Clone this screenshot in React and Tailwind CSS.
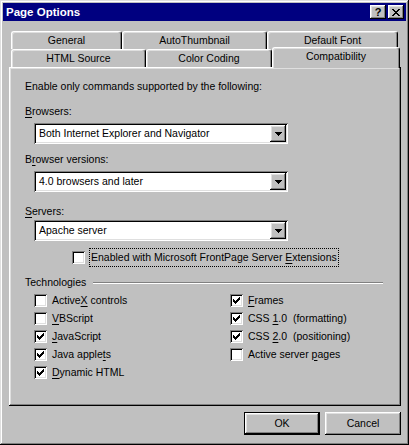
import React from "react";

const raised =
  "shadow-[inset_-1px_-1px_0_#000,inset_1px_1px_0_#fff,inset_-2px_-2px_0_#808080,inset_2px_2px_0_#dfdfdf]";
const sunken =
  "shadow-[inset_1px_1px_0_#808080,inset_-1px_-1px_0_#fff,inset_2px_2px_0_#000,inset_-2px_-2px_0_#dfdfdf]";

function Check() {
  const px = [
    [6, 0],
    [5, 1], [6, 1],
    [0, 2], [4, 2], [5, 2], [6, 2],
    [0, 3], [1, 3], [3, 3], [4, 3], [5, 3],
    [0, 4], [1, 4], [2, 4], [3, 4], [4, 4],
    [1, 5], [2, 5], [3, 5],
    [2, 6],
  ];
  return (
    <svg width="7" height="7" viewBox="0 0 7 7" shapeRendering="crispEdges" className="block">
      {px.map(([x, y], i) => (
        <rect key={i} x={x} y={y} width="1" height="1" fill="#000" />
      ))}
    </svg>
  );
}

function CloseX() {
  const px = [
    [0, 0], [1, 0], [6, 0], [7, 0],
    [1, 1], [2, 1], [5, 1], [6, 1],
    [2, 2], [3, 2], [4, 2], [5, 2],
    [3, 3], [4, 3],
    [2, 4], [3, 4], [4, 4], [5, 4],
    [1, 5], [2, 5], [5, 5], [6, 5],
    [0, 6], [1, 6], [6, 6], [7, 6],
  ];
  return (
    <svg width="8" height="7" viewBox="0 0 8 7" shapeRendering="crispEdges" className="block">
      {px.map(([x, y], i) => (
        <rect key={i} x={x} y={y} width="1" height="1" fill="#000" />
      ))}
    </svg>
  );
}

function Arrow() {
  return (
    <svg width="7" height="4" viewBox="0 0 7 4" shapeRendering="crispEdges" className="block">
      <rect x="0" y="0" width="7" height="1" fill="#000" />
      <rect x="1" y="1" width="5" height="1" fill="#000" />
      <rect x="2" y="2" width="3" height="1" fill="#000" />
      <rect x="3" y="3" width="1" height="1" fill="#000" />
    </svg>
  );
}

function CheckBox({ checked }) {
  return (
    <div className={`w-[13px] h-[13px] bg-white shrink-0 flex items-start justify-start ${sunken}`}>
      {checked && (
        <div className="mt-[3px] ml-[3px]">
          <Check />
        </div>
      )}
    </div>
  );
}

function Select({ value }) {
  return (
    <div className={`ml-[9px] w-[254px] h-[21px] bg-white flex items-center p-[2px] ${sunken}`}>
      <span className="pl-[3px] flex-1 leading-[13px]">{value}</span>
      <div className={`w-[16px] h-[17px] bg-[#c0c0c0] flex items-center justify-center ${raised}`}>
        <Arrow />
      </div>
    </div>
  );
}

function Tab({ w, children, selected }) {
  return (
    <div
      className={`shrink-0 bg-[#c0c0c0] border-t border-l border-white border-r border-r-black rounded-t-[3px] shadow-[inset_-1px_0_0_#808080,inset_1px_1px_0_#dfdfdf] flex items-center justify-center leading-[13px] ${selected ? "h-[21px] mb-[-1px] relative z-10 pb-[3px]" : "h-[18px]"}`}
      style={{ width: w }}
    >
      {children}
    </div>
  );
}

function Item({ checked, children }) {
  return (
    <div className="h-[18px] flex items-center gap-[5px]">
      <CheckBox checked={checked} />
      <span className="leading-[13px]">{children}</span>
    </div>
  );
}

const U = ({ children }) => <span className="underline underline-offset-[2px]">{children}</span>;

export default function App() {
  return (
    <div
      className={`w-[409px] h-[445px] bg-[#c0c0c0] text-black text-[10.5px] font-['Liberation_Sans',Arial,sans-serif] flex flex-col shadow-[inset_-1px_-1px_0_#000,inset_1px_1px_0_#dfdfdf,inset_-2px_-2px_0_#808080,inset_2px_2px_0_#fff] overflow-hidden`}
    >
      {/* Title bar */}
      <div className="mx-[3px] mt-[3px] h-[18px] bg-[#000080] flex items-center pl-[3px] pr-[2px]">
        <span className="text-white font-bold text-[11.5px] leading-[14px]">Page Options</span>
        <div className="ml-auto flex gap-[2px]">
          <div className={`w-[16px] h-[14px] bg-[#c0c0c0] flex items-center justify-center font-bold text-[11px] leading-[12px] ${raised}`}>
            ?
          </div>
          <div className={`w-[16px] h-[14px] bg-[#c0c0c0] flex items-center justify-center ${raised}`}>
            <CloseX />
          </div>
        </div>
      </div>

      {/* Tabs back row */}
      <div className="ml-[11px] mt-[10px] flex h-[18px]">
        <Tab w={111}>General</Tab>
        <Tab w={145}>AutoThumbnail</Tab>
        <Tab w={131}>Default Font</Tab>
      </div>
      {/* Tabs front row */}
      <div className="ml-[11px] flex items-end h-[18px] relative z-10">
        <Tab w={135}>HTML Source</Tab>
        <Tab w={126}>Color Coding</Tab>
        <Tab w={128} selected>
          Compatibility
        </Tab>
      </div>

      {/* Panel */}
      <div
        className={`ml-[9px] w-[392px] h-[339px] bg-[#c0c0c0] shadow-[inset_-1px_-1px_0_#000,inset_1px_1px_0_#fff,inset_-2px_-2px_0_#808080,inset_2px_2px_0_#dfdfdf] pl-[16px] pt-[13px] flex flex-col`}
      >
        <div className="leading-[13px]">Enable only commands supported by the following:</div>
        <div className="leading-[13px] mt-[12px]">
          <U>B</U>rowsers:
        </div>
        <div className="mt-[5px]">
          <Select value="Both Internet Explorer and Navigator" />
        </div>
        <div className="leading-[13px] mt-[9px]">
          B<U>r</U>owser versions:
        </div>
        <div className="mt-[5px]">
          <Select value="4.0 browsers and later" />
        </div>
        <div className="leading-[13px] mt-[13px]">
          <U>S</U>ervers:
        </div>
        <div className="mt-[2px]">
          <Select value="Apache server" />
        </div>
        <div className="mt-[7px] ml-[47px] h-[19px] flex items-center gap-[4px]">
          <CheckBox checked={false} />
          <span className="border border-dotted border-black h-[19px] px-[1px] flex items-center leading-[13px]">
            <span>
              Enabled with Microsoft FrontPage Server <U>E</U>xtensions
            </span>
          </span>
        </div>

        {/* Technologies */}
        <div className="mt-[9px] flex items-center h-[13px]">
          <span className="leading-[13px]">Technologies</span>
          <div className="ml-[7px] w-[290px] h-[2px] border-t border-[#808080] border-b border-b-white" />
        </div>
        <div className="mt-[2px] ml-[9px] grid grid-cols-[196px_1fr]">
          <div className="flex flex-col">
            <Item checked={false}>
              Active<U>X</U> controls
            </Item>
            <Item checked={false}>
              <U>V</U>BScript
            </Item>
            <Item checked>
              <U>J</U>avaScript
            </Item>
            <Item checked>
              Java apple<U>t</U>s
            </Item>
            <Item checked>
              <U>D</U>ynamic HTML
            </Item>
          </div>
          <div className="flex flex-col">
            <Item checked>
              <U>F</U>rames
            </Item>
            <Item checked>
              CSS <U>1</U>.0&nbsp; (formatting)
            </Item>
            <Item checked>
              CSS <U>2</U>.0&nbsp; (positioning)
            </Item>
            <Item checked={false}>
              Active server <U>p</U>ages
            </Item>
          </div>
        </div>
      </div>

      {/* Buttons */}
      <div className="mt-[6px] flex justify-end gap-[5px] pr-[8px]">
        <div className="w-[76px] h-[23px] border border-black">
          <div className={`w-full h-full flex items-center justify-center leading-[13px] ${raised}`}>OK</div>
        </div>
        <div className={`w-[76px] h-[23px] flex items-center justify-center leading-[13px] ${raised}`}>Cancel</div>
      </div>
    </div>
  );
}
